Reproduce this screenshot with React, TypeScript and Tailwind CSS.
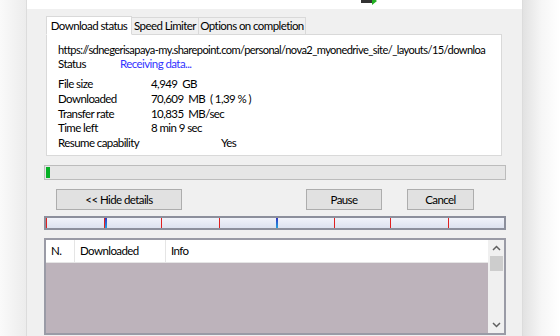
import React from "react";

const rows: [string, string][] = [
  ["File size", "4,949  GB"],
  ["Downloaded", "70,609  MB  ( 1,39 % )"],
  ["Transfer rate", "10,835  MB/sec"],
  ["Time left", "8 min 9 sec"],
];

const markers = [
  { x: 0, c: "red" },
  { x: 57.5, c: "both" },
  { x: 115, c: "red" },
  { x: 172.5, c: "red" },
  { x: 230, c: "blue" },
  { x: 287.5, c: "red" },
  { x: 344, c: "red" },
  { x: 401.5, c: "red" },
];

export default function App() {
  return (
    <div
      className="w-[560px] h-[336px] overflow-hidden bg-[#f7f7f7] flex text-[11.5px] text-black tracking-tighter whitespace-nowrap"
      style={{ fontFamily: 'Lato, "Noto Sans", sans-serif' }}
    >
      <div className="w-[26px] shrink-0 bg-gradient-to-r from-[#fafafa] to-[#ececec]" />
      <div className="w-[497px] shrink-0 border-l border-[#dcdcdc] border-r bg-[#f0f0f0] flex flex-col relative">
        <div className="h-[9px] bg-white relative shrink-0">
          <div className="absolute left-[334px] top-0 w-[12px] h-[3px] bg-[#333]" />
          <div className="absolute left-[345px] top-[-3px] w-0 h-0 border-t-[4px] border-b-[4px] border-l-[5px] border-t-transparent border-b-transparent border-l-[#22b022]" />
        </div>
        {/* tabs */}
        <div className="pl-[19px] pr-[20px] pt-[8px]">
          <div className="flex items-end h-[17px] relative z-10">
            <div className="w-[86px] shrink-0 h-[19px] -mb-px bg-white border border-[#d9d9d9] border-b-white flex items-center justify-center leading-none">
              Download status
            </div>
            <div className="w-[67px] shrink-0 h-[17px] bg-[#f0f0f0] border border-[#d9d9d9] border-l-0 border-b-0 flex items-center justify-center leading-none">
              Speed Limiter
            </div>
            <div className="w-[107px] shrink-0 h-[17px] bg-[#f0f0f0] border border-[#d9d9d9] border-l-0 border-b-0 flex items-center justify-center leading-none">
              Options on completion
            </div>
          </div>
          <div className="h-[122px] bg-white border border-[#d9d9d9] pl-[11px] pt-[7px] overflow-hidden">
            <div className="leading-[15px] text-[11.1px] overflow-hidden w-[442px]">
              https://sdnegerisapaya-my.sharepoint.com/personal/nova2_myonedrive_site/_layouts/15/downloa
            </div>
            <div className="flex leading-[15px] -mt-px">
              <div className="w-[62px]">Status</div>
              <div className="text-[#3333ff]">Receiving data...</div>
            </div>
            <div className="mt-[6px] flex flex-col">
              {rows.map(([l, v]) => (
                <div key={l} className="flex leading-[14.75px]">
                  <div className="w-[93px]">{l}</div>
                  <div className="whitespace-pre">{v}</div>
                </div>
              ))}
              <div className="flex leading-[14.75px]">
                <div className="w-[163px]">Resume capability</div>
                <div>Yes</div>
              </div>
            </div>
          </div>
        </div>
        {/* progress */}
        <div className="ml-[17px] mt-[9px] w-[462px] h-[15px] bg-[#e6e6e6] border border-[#bcbcbc] p-px">
          <div className="w-[4px] h-full bg-[#06b025]" />
        </div>
        {/* buttons */}
        <div className="flex mt-[9px] h-[21px]">
          <button className="ml-[29px] w-[126px] h-[21px] bg-[#e1e1e1] border border-[#adadad] leading-none">
            &lt;&lt; Hide details
          </button>
          <button className="ml-[124px] w-[76px] h-[21px] bg-[#e1e1e1] border border-[#adadad] leading-none">
            Pause
          </button>
          <button className="ml-[25px] w-[67px] h-[21px] bg-[#e1e1e1] border border-[#adadad] leading-none">
            Cancel
          </button>
        </div>
        {/* segment bar */}
        <div className="ml-[17px] mt-[6px] w-[462px] h-[14px] border-2 border-[#8c8f9c] bg-gradient-to-b from-[#f1f3fa] to-[#dde2ef] relative">
          {markers.map((m, i) => (
            <div key={i} className="absolute top-0 bottom-0 flex" style={{ left: m.x }}>
              {m.c !== "blue" && <div className="w-px h-full bg-[#e02020]" />}
              {m.c !== "red" && <div className="w-[2px] h-full bg-gradient-to-b from-[#3030c0] to-[#20a0e0]" />}
            </div>
          ))}
        </div>
        {/* list */}
        <div className="ml-[17px] mt-[8px] w-[462px] h-[97px] border-2 border-[#9a9ba6] flex bg-[#bdb3bb]">
          <div className="flex-1 flex flex-col">
            <div className="h-[23px] bg-white border-b border-[#e5e5e5] flex items-center">
              <div className="w-[29px] pl-[5px] h-full flex items-center border-r border-[#e5e5e5]">N.</div>
              <div className="w-[91px] pl-[5px] h-full flex items-center border-r border-[#e5e5e5]">Downloaded</div>
              <div className="pl-[5px]">Info</div>
              <div className="flex-1" />
            </div>
            <div className="flex-1" />
          </div>
          <div className="w-[16px] bg-[#f0f0f0] flex flex-col items-center">
            <div className="h-[16px] flex items-center justify-center">
              <svg width="9" height="6" viewBox="0 0 9 6"><path d="M1 5 L4.5 1.5 L8 5" stroke="#606060" strokeWidth="1.5" fill="none" /></svg>
            </div>
            <div className="w-[13px] h-[15px] bg-[#cdcdcd]" />
            <div className="flex-1" />
            <div className="h-[16px] flex items-center justify-center">
              <svg width="9" height="6" viewBox="0 0 9 6"><path d="M1 1 L4.5 4.5 L8 1" stroke="#606060" strokeWidth="1.5" fill="none" /></svg>
            </div>
          </div>
        </div>
      </div>
      <div className="flex-1 bg-gradient-to-r from-[#e2e2e2] via-[#f6f6f6] to-white" />
    </div>
  );
}
